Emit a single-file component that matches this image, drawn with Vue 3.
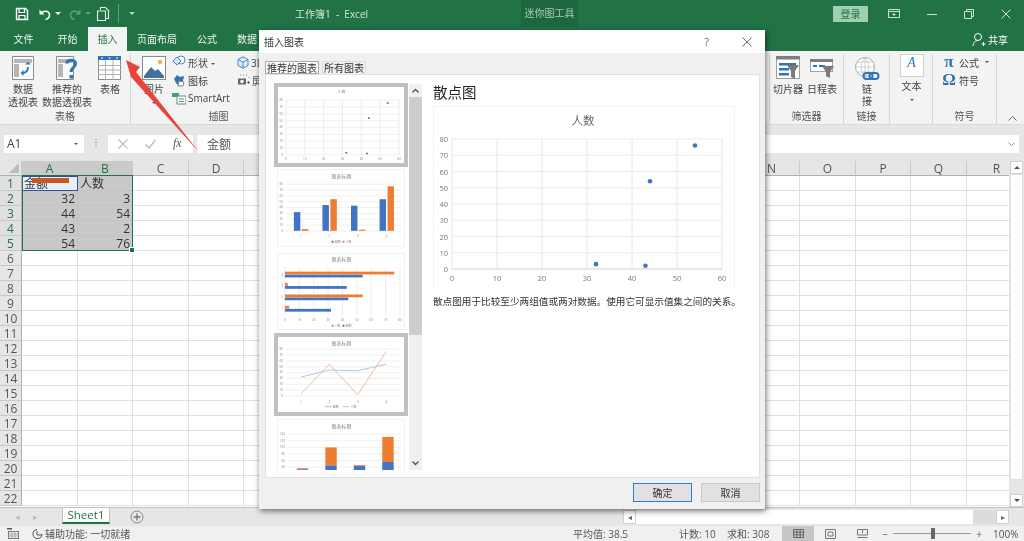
<template>
  <div class="app">
    <!-- 标题栏 -->
    <div class="titlebar">
      <div class="qat">
        <svg class="q q-save" width="14" height="14" viewBox="0 0 14 14"><path d="M1.500 1.500h9l2 2v9h-11z" fill="none" stroke="#fff" stroke-width="1.400"/><path d="M4 2v3.500h5.500V2M4 12.500V8.500h6v4" fill="none" stroke="#fff" stroke-width="1.200"/></svg>
        <svg class="q q-undo" width="14" height="14" viewBox="0 0 14 14"><path d="M3 6.500c2-3.500 8.500-3 8.500 1.500 0 2.500-2 4-4 4.500" fill="none" stroke="#fff" stroke-width="1.600"/><path d="M1.500 2.500v5h5z" fill="#fff"/></svg>
        <span class="mini-caret"></span>
        <svg class="q q-redo" width="14" height="14" viewBox="0 0 14 14"><path d="M11 6.500c-2-3.500-8.500-3-8.500 1.500 0 2.500 2 4 4 4.500" fill="none" stroke="#5f9c7c" stroke-width="1.600"/><path d="M12.500 2.500v5h-5z" fill="#5f9c7c"/></svg>
        <span class="mini-caret dim"></span>
        <svg class="q q-page" width="14" height="16" viewBox="0 0 14 16"><path d="M4.500 4V1.500h5l3 3v8h-3M1.500 5h8v9.500h-8z" fill="none" stroke="#e6f0ea" stroke-width="1.100"/></svg>
        <span class="q-sep"></span>
        <span class="mini-caret line"></span>
      </div>
      <div class="doc-title">工作簿1&nbsp; - &nbsp;Excel</div>
      <div class="context">迷你图工具</div>
      <button class="login">登录</button>
      <div class="win">
        <svg width="12" height="10" viewBox="0 0 12 10"><path d="M.5.5h11v8H.5zM.5 2.500h11M6 4v3M4.500 5.500h3" fill="none" stroke="#cfe3d8"/></svg>
        <svg width="10" height="10" viewBox="0 0 10 10"><path d="M0 5.500h10" stroke="#cfe3d8"/></svg>
        <svg width="10" height="10" viewBox="0 0 10 10"><path d="M.5 2.500h7v7h-7zM2.500 2.500v-2h7v7h-2" fill="none" stroke="#cfe3d8"/></svg>
        <svg width="10" height="10" viewBox="0 0 10 10"><path d="M.5.5l9 9M9.500.5l-9 9" stroke="#cfe3d8"/></svg>
      </div>
    </div>

    <!-- 选项卡 -->
    <div class="tabs">
      <span v-for="t in ribbonTabs" :key="t.name" class="tab" :class="{ active: t.active }" :style="{ width: t.w + 'px' }">{{ t.name }}</span>
      <div class="share">
        <svg width="14" height="15" viewBox="0 0 14 15"><circle cx="6" cy="5" r="3.500" fill="none" stroke="#fff"/><path d="M1 14c.5-4 2.500-5.500 5-5.500M9.500 12h4M11.500 10v4" fill="none" stroke="#fff"/></svg>
        <span>共享</span>
      </div>
    </div>

    <!-- 功能区 -->
    <div class="ribbon">
      <div class="rg" style="width: 131px">
        <div class="rg-body">
          <div class="big" style="width: 42px; margin-left: 2px">
            <svg width="24" height="24" viewBox="0 0 24 24"><path d="M1.500.5h21v23h-21z" fill="#fafafa" stroke="#8a8a8a"/><path d="M3 3h18v4H3zM3 8h5v13H3z" fill="#b5b5b5"/><path d="M11 17c4 0 6-2 6-6" fill="none" stroke="#2e75b6" stroke-width="1.800"/><path d="M14 8.500l3-2.500 3 2.500zM12.500 14l-3 3 3 3z" fill="#2e75b6"/></svg>
            <span>数据<br>透视表</span>
          </div>
          <div class="big" style="width: 46px">
            <svg width="24" height="24" viewBox="0 0 24 24"><path d="M1.500.5h17v23h-17z" fill="#fafafa" stroke="#8a8a8a"/><path d="M3 3h14v4H3zM3 8h5v13H3z" fill="#b5b5b5"/><path d="M11.500 7.500c1-4.500 9-4.500 9 .5 0 3.500-4.500 3.500-4.500 8" fill="none" stroke="#2e75b6" stroke-width="3"/><rect x="14.500" y="19" width="3.500" height="3.500" fill="#2e75b6"/></svg>
            <span>推荐的<br>数据透视表</span>
          </div>
          <div class="big" style="width: 40px">
            <svg width="24" height="24" viewBox="0 0 24 24"><rect x=".5" y=".5" width="22" height="23" fill="#fff" stroke="#8a8a8a"/><path d="M0 9.500h23M0 14h23M0 18.500h23M7.500 4v20M15 4v20" stroke="#b0b0b0"/><rect y="0" width="23" height="4" fill="#2e75b6"/><path d="M3 2h2M10.500 2h2M18 2h2" stroke="#fff"/></svg>
            <span>表格</span>
          </div>
        </div>
        <div class="rg-label">表格</div>
      </div>

      <div class="rg" style="width: 639px">
        <div class="rg-body">
          <div class="big" style="width: 38px; margin-left: 4px">
            <svg width="24" height="24" viewBox="0 0 24 24"><rect x=".5" y=".5" width="23" height="23" fill="#fff" stroke="#8a8a8a"/><circle cx="18" cy="6" r="2.200" fill="#f0b04d"/><path d="M2 20l7-9 4 4 3-2 6 7v2H2z" fill="#41719c"/></svg>
            <span>图片<br><i class="caret"></i></span>
          </div>
          <div class="smalls col2">
            <div class="small"><svg width="14" height="14" viewBox="0 0 14 14"><circle cx="9" cy="5" r="4" fill="#fff" stroke="#4a86c5"/><path d="M1 6l4-4 4 4-4 4z" fill="#dce6f2" stroke="#4a86c5"/></svg><span>形状 <i class="caret"></i></span></div>
            <div class="small"><svg width="14" height="14" viewBox="0 0 14 14"><path d="M2 6l3-4 3 2 4-1-1 5-4 5-3-3z" fill="#2e75b6"/><path d="M7 8l5 1-1 4H6z" fill="#fff" stroke="#7f7f7f"/></svg><span>图标</span></div>
            <div class="small"><svg width="14" height="14" viewBox="0 0 14 14"><path d="M0 2h7v4H0z" fill="#3aa37a"/><path d="M5 5h9v8H5z" fill="#fff" stroke="#7f7f7f"/><path d="M7 8h5M7 10.500h5" stroke="#3aa37a"/></svg><span>SmartArt</span></div>
          </div>
          <div class="smalls">
            <div class="small"><svg width="12" height="13" viewBox="0 0 12 13"><path d="M6 .8l5 2.700v6L6 12.200 1 9.500v-6zM1 3.500l5 2.700 5-2.700M6 6.200v6" fill="#e4eef7" stroke="#3f87c6"/></svg><span>3D 模型</span></div>
            <div class="small"><svg width="13" height="12" viewBox="0 0 13 12"><path d="M1 4.500h8v6H1z" fill="#666"/><circle cx="5" cy="7.500" r="1.800" fill="#fff"/><path d="M3 1h1M6 1h1M9 1h1M12 3v1" stroke="#888"/><path d="M10 8.500h3M11.500 7v3" stroke="#2e75b6"/></svg><span>屏幕截图</span></div>
          </div>
        </div>
        <div class="rg-label" style="margin-right: 463px">插图</div>
      </div>

      <div class="rg" style="width: 74px">
        <div class="rg-body">
          <div class="big" style="width: 36px">
            <svg width="24" height="24" viewBox="0 0 24 24"><rect x=".5" y=".5" width="23" height="22" fill="#fff" stroke="#a0a0a0"/><rect width="24" height="3.500" fill="#7f7f7f"/><path d="M3 7h17v2.500H3zM3 12h10v2.500H3zM3 17h10v2.500H3z" fill="#2e75b6"/><path d="M11 9h12l-4 6v8l-4-2v-6z" fill="#7a7a7a"/></svg>
            <span>切片器</span>
          </div>
          <div class="big" style="width: 32px">
            <svg width="24" height="24" viewBox="0 0 24 24"><rect x=".5" y="3.500" width="22" height="12" fill="#fff" stroke="#a0a0a0"/><rect y="3" width="23" height="3" fill="#7f7f7f"/><path d="M3 9h4v2H3zM9 9h6v2H9z" fill="#2e75b6"/><path d="M12 10h12l-4 6v6l-4-2v-4z" fill="#7a7a7a"/></svg>
            <span>日程表</span>
          </div>
        </div>
        <div class="rg-label">筛选器</div>
      </div>

      <div class="rg" style="width: 46px">
        <div class="rg-body">
          <div class="big" style="width: 46px">
            <svg width="26" height="26" viewBox="0 0 26 26"><circle cx="11" cy="11" r="9.500" fill="#fff" stroke="#a8a8a8"/><path d="M1.500 11h19M11 1.500v19M3.500 6h15M3.500 16h15M11 1.500c-5 5-5 14 0 19M11 1.500c5 5 5 14 0 19" fill="none" stroke="#bdbdbd" stroke-width=".7"/><rect x="9.500" y="17" width="9" height="6" rx="3" fill="none" stroke="#2e75b6" stroke-width="2"/><rect x="15.500" y="17" width="9" height="6" rx="3" fill="none" stroke="#2e75b6" stroke-width="2"/></svg>
            <span class="tight">链<br>接</span>
          </div>
        </div>
        <div class="rg-label">链接</div>
      </div>

      <div class="rg" style="width: 43px">
        <div class="rg-body">
          <div class="big big-text">
            <div class="text-box">A</div>
            <span>文本<br><i class="caret"></i></span>
          </div>
        </div>
      </div>

      <div class="rg" style="width: 64px">
        <div class="rg-body">
          <div class="smalls sym">
            <div class="small"><b>π</b><span>公式</span><i class="caret far"></i></div>
            <div class="small"><b>Ω</b><span>符号</span></div>
          </div>
        </div>
        <div class="rg-label">符号</div>
      </div>
      <svg class="collapse" width="9" height="5" viewBox="0 0 9 5"><path d="M.5 4.500l4-4 4 4" fill="none" stroke="#666"/></svg>
    </div>

    <!-- 编辑栏 -->
    <div class="formula">
      <div class="namebox"><span>A1</span><i class="caret"></i></div>
      <div class="dots"></div>
      <div class="fx-btns">
        <svg width="10" height="10" viewBox="0 0 10 10"><path d="M.5.5l9 9M9.500.5l-9 9" stroke="#bdbdbd" stroke-width="1.200"/></svg>
        <svg width="11" height="10" viewBox="0 0 11 10"><path d="M.5 5.500l3.500 3.500 6.500-8" fill="none" stroke="#bdbdbd" stroke-width="1.400"/></svg>
        <em>fx</em>
      </div>
      <div class="finput"><span>金额</span><svg width="7" height="4" viewBox="0 0 7 4"><path d="M.5.5l3 3 3-3" fill="none" stroke="#999"/></svg></div>
    </div>

    <!-- 工作表 -->
    <div class="sheet-wrap">
      <div class="sheet" :style="{ gridTemplateColumns: gridCols }">
        <div class="corner"><i></i></div>
        <div v-for="(c, i) in columns" :key="c" class="chead" :class="{ on: i < 2 }">{{ c }}</div>
        <template v-for="r in 22" :key="r">
          <div class="rhead" :class="{ on: r <= 5 }">{{ r }}</div>
          <div v-for="(c, i) in columns" :key="c" class="cell"
            :class="{ sel: r <= 5 && i < 2, num: r > 1, active: r === 1 && i === 0 }">{{ cellText(r, i) }}</div>
        </template>
        <div class="sel-box"><i></i></div>
        <div class="a1-bar"></div>
      </div>
      <div class="vscroll">
        <div class="sb-btn"><i class="up"></i></div>
        <div class="sb-thumb"></div>
        <div class="sb-track"></div>
        <div class="sb-btn"><i class="down"></i></div>
      </div>
    </div>

    <!-- 底部工作表标签 -->
    <div class="sheetbar">
      <span class="nav">◂</span><span class="nav">▸</span>
      <div class="sheet-tab">Sheet1</div>
      <svg class="plus" width="14" height="14" viewBox="0 0 14 14"><circle cx="7" cy="7" r="6" fill="none" stroke="#8a8a8a"/><path d="M7 3.500v7M3.500 7h7" stroke="#777" stroke-width="1.300"/></svg>
      <div class="hs">
        <div class="hs-btn">◂</div>
        <div class="hs-thumb"></div>
        <div class="hs-btn">▸</div>
      </div>
    </div>

    <!-- 状态栏 -->
    <div class="status">
      <svg class="st-ic" width="12" height="11" viewBox="0 0 12 11"><path d="M0 .5h5" stroke="#555" stroke-width="2"/><rect x="1.500" y="3.500" width="10" height="7" fill="none" stroke="#777"/><path d="M1.500 6h10M1.500 8h10M5 3.500v7M8 3.500v7" stroke="#aaa"/></svg>
      <svg class="st-ic2" width="12" height="12" viewBox="0 0 12 12"><path d="M5 1.500a4.500 4.500 0 1 0 5 4.500" fill="none" stroke="#555"/><path d="M5 3v4h5" fill="none" stroke="#555"/></svg>
      <span class="st-a">辅助功能: 一切就绪</span>
      <span class="st-avg">平均值: 38.5</span>
      <span class="st-cnt">计数: 10</span>
      <span class="st-sum">求和: 308</span>
      <div class="view on"><svg width="11" height="9" viewBox="0 0 11 9"><path d="M.5.500h10v8H.5zM.5 3.200h10M.5 5.800h10M3.800.5v8M7.200.5v8" fill="none" stroke="#666"/></svg></div>
      <div class="view"><svg width="11" height="10" viewBox="0 0 11 10"><path d="M.5.500h10v9H.5zM3 3h5v4H3z" fill="none" stroke="#777"/></svg></div>
      <div class="view"><svg width="11" height="10" viewBox="0 0 11 10"><path d="M.5 6V.5h10V6zM5.500.5V4M.5 8.500h10" fill="none" stroke="#777"/></svg></div>
      <span class="zm">−</span>
      <div class="slider"><i></i></div>
      <span class="zm plus-zm">+</span>
      <span class="pct">100%</span>
    </div>

    <!-- 插入图表 对话框 -->
    <div class="dialog">
      <div class="dlg-title">
        <span>插入图表</span>
        <span class="help">?</span>
        <svg width="10" height="10" viewBox="0 0 10 10"><path d="M.5.5l9 9M9.500.5l-9 9" stroke="#666"/></svg>
      </div>
      <div class="dlg-body">
        <div class="dlg-tabs">
          <span class="dtab on">推荐的图表</span>
          <span class="dtab">所有图表</span>
        </div>
        <div class="dlg-panel">
          <div class="thumbs">
            <div class="thumb-list">
              <!-- 散点 -->
              <div class="thumb frame" style="height: 84px; margin-bottom: 2px">
                <svg width="127" height="76" viewBox="0 0 127 76">
                  <text x="64" y="6" class="t-title" style="font-size: 4px">人数</text>
                  <path v-for="g in 9" :key="g" :d="`M8 ${13 + (g - 1) * 6.900}H122`" stroke="#e8e8e8" stroke-width=".7"/>
                  <path v-for="g in 7" :key="g" :d="`M${8 + (g - 1) * 19} 13V68`" stroke="#e4e4e4" stroke-width=".7"/>
                  <circle v-for="(p, i) in points" :key="i" :cx="8 + p[0] * 1.900" :cy="68 - p[1] * 0.6875" r="1" fill="#4472c4"/>
                  <text v-for="g in 9" :key="g" x="5" :y="69 - (g - 1) * 6.900" class="t-ax">{{ (g - 1) * 10 }}</text>
                  <text v-for="g in 7" :key="g" :x="8 + (g - 1) * 19" y="73" class="t-ax mid">{{ (g - 1) * 10 }}</text>
                </svg>
              </div>
              <!-- 柱形 -->
              <div class="thumb plain" style="height: 78px; margin-bottom: 6px">
                <svg width="127" height="76" viewBox="0 0 127 76">
                  <text x="64" y="8" class="t-title">图表标题</text>
                  <path v-for="g in 9" :key="g" :d="`M8 ${14 + (g - 1) * 5.900}H124`" stroke="#e8e8e8" stroke-width=".7"/>
                  <template v-for="(a, i) in amount" :key="i">
                    <rect :x="16 + i * 28.800" :y="61 - a * 0.59" width="6.500" :height="a * 0.59" fill="#4472c4"/>
                    <rect :x="24 + i * 28.800" :y="61 - people[i] * 0.59" width="6.500" :height="people[i] * 0.59" fill="#ed7d31"/>
                    <text :x="23 + i * 28.800" y="67" class="t-ax mid">{{ i + 1 }}</text>
                  </template>
                  <text v-for="g in 9" :key="g" x="5" :y="62 - (g - 1) * 5.900" class="t-ax">{{ (g - 1) * 10 }}</text>
                  <rect x="54" y="71" width="2" height="2" fill="#4472c4"/><text x="57" y="73" class="t-ax start">金额</text>
                  <rect x="65" y="71" width="2" height="2" fill="#ed7d31"/><text x="68" y="73" class="t-ax start">人数</text>
                </svg>
              </div>
              <!-- 条形 -->
              <div class="thumb plain" style="height: 77px; margin-bottom: 3px">
                <svg width="127" height="76" viewBox="0 0 127 76">
                  <text x="64" y="7" class="t-title">图表标题</text>
                  <path v-for="g in 9" :key="g" :d="`M${7 + (g - 1) * 14.500} 13V62`" stroke="#e4e4e4" stroke-width=".7"/>
                  <template v-for="(a, i) in amount" :key="i">
                    <rect x="7" :y="55 - i * 11.500" :width="a * 1.450" height="2.800" fill="#4472c4"/>
                    <rect x="7" :y="52 - i * 11.500" :width="people[i] * 1.450" height="2.800" fill="#ed7d31"/>
                    <text x="5" :y="56 - i * 11.500" class="t-ax">{{ i + 1 }}</text>
                  </template>
                  <text v-for="g in 9" :key="g" :x="7 + (g - 1) * 14.500" y="67" class="t-ax mid">{{ (g - 1) * 10 }}</text>
                  <rect x="54" y="71" width="2" height="2" fill="#ed7d31"/><text x="57" y="73" class="t-ax start">人数</text>
                  <rect x="65" y="71" width="2" height="2" fill="#4472c4"/><text x="68" y="73" class="t-ax start">金额</text>
                </svg>
              </div>
              <!-- 折线 -->
              <div class="thumb frame" style="height: 83px; margin-bottom: 3px">
                <svg width="127" height="75" viewBox="0 0 127 75">
                  <text x="64" y="8" class="t-title">图表标题</text>
                  <path v-for="g in 9" :key="g" :d="`M8 ${12 + (g - 1) * 5.900}H123`" stroke="#e8e8e8" stroke-width=".7"/>
                  <polyline :points="linePts(amount)" fill="none" stroke="#a9bde3" stroke-width=".9"/>
                  <polyline :points="linePts(people)" fill="none" stroke="#f4b183" stroke-width=".9"/>
                  <text v-for="g in 9" :key="g" x="5" :y="60 - (g - 1) * 5.900" class="t-ax">{{ (g - 1) * 10 }}</text>
                  <text v-for="g in 4" :key="g" :x="23 + (g - 1) * 28.700" y="66" class="t-ax mid">{{ g }}</text>
                  <path d="M47 70h7" stroke="#a9bde3"/><text x="55" y="71" class="t-ax start">金额</text>
                  <path d="M65 70h7" stroke="#f4b183"/><text x="73" y="71" class="t-ax start">人数</text>
                </svg>
              </div>
              <!-- 堆积柱形 -->
              <div class="thumb plain" style="height: 78px">
                <svg width="127" height="76" viewBox="0 0 127 76">
                  <text x="64" y="8" class="t-title">图表标题</text>
                  <path v-for="g in 8" :key="g" :d="`M10 ${14 + (g - 1) * 6.650}H124`" stroke="#e8e8e8" stroke-width=".7"/>
                  <template v-for="(a, i) in amount" :key="i">
                    <rect :x="19 + i * 28.700" :y="60 - a * 0.333" width="11.500" :height="a * 0.333" fill="#4472c4"/>
                    <rect :x="19 + i * 28.700" :y="60 - (a + people[i]) * 0.333" width="11.500" :height="people[i] * 0.333" fill="#ed7d31"/>
                  </template>
                  <text v-for="g in 6" :key="g" x="7" :y="15 + (g - 1) * 6.650" class="t-ax">{{ 160 - g * 20 }}</text>
                </svg>
              </div>
            </div>
            <div class="t-scroll">
              <div class="ts-btn"><svg width="7" height="5" viewBox="0 0 7 5"><path d="M.5 4.500l3-3 3 3" fill="none" stroke="#555" stroke-width="1.400"/></svg></div>
              <div class="ts-thumb"></div>
              <div class="ts-track"></div>
              <div class="ts-btn"><svg width="7" height="5" viewBox="0 0 7 5"><path d="M.5.5l3 3 3-3" fill="none" stroke="#555" stroke-width="1.400"/></svg></div>
            </div>
          </div>
          <div class="preview">
            <h2>散点图</h2>
            <div class="chart">
              <svg width="302" height="183" viewBox="0 0 302 183">
                <text x="150" y="19" class="c-title">人数</text>
                <path v-for="g in 9" :key="g" :d="`M19 ${33 + (g - 1) * 16.250}H289`" stroke="#ebebeb"/>
                <path v-for="g in 7" :key="g" :d="`M${19 + (g - 1) * 45} 33V163`" stroke="#e6e6e6"/>
                <path d="M19 163H289" stroke="#d9d9d9"/>
                <text v-for="g in 9" :key="g" x="15" :y="166 - (g - 1) * 16.250" class="c-ax">{{ (g - 1) * 10 }}</text>
                <text v-for="g in 7" :key="g" :x="19 + (g - 1) * 45" y="175" class="c-ax mid">{{ (g - 1) * 10 }}</text>
                <circle v-for="(p, i) in points" :key="i" :cx="19 + p[0] * 4.500" :cy="163 - p[1] * 1.625" r="2.300" fill="#4472c4"/>
              </svg>
            </div>
            <p>散点图用于比较至少两组值或两对数据。使用它可显示值集之间的关系。</p>
          </div>
        </div>
        <div class="dlg-foot">
          <button class="btn primary">确定</button>
          <button class="btn">取消</button>
        </div>
      </div>
    </div>

    <!-- 红色箭头标注 -->
    <svg class="arrow" width="90" height="110" viewBox="120 50 90 110">
      <polygon points="126,60 140,67 136,72 199,152 131,77" fill="#e8443c"/>
    </svg>
  </div>
</template>

<script setup>
const ribbonTabs = [
  { name: '文件', w: 47 },
  { name: '开始', w: 41 },
  { name: '插入', w: 39, active: true },
  { name: '页面布局', w: 60 },
  { name: '公式', w: 40 },
  { name: '数据', w: 40 }
]

const columns = 'ABCDEFGHIJKLMNOPQR'.split('')
const widths = [56, 55, 56, 55, 56, 55, 56, 55, 56, 55, 56, 55, 56, 56, 56, 55, 56, 60]
const gridCols = '22px ' + widths.map(w => w + 'px').join(' ')

const amount = [32, 44, 43, 54]
const people = [3, 54, 2, 76]
const points = amount.map((a, i) => [a, people[i]])

const cellText = (r, i) => {
  if (i > 1 || r > 5) return ''
  if (r === 1) return i === 0 ? '金额' : '人数'
  return i === 0 ? amount[r - 2] : people[r - 2]
}

const linePts = arr => arr.map((v, i) => `${23 + i * 28.7},${59 - v * 0.59}`).join(' ')
</script>

<style>
html, body { margin: 0; padding: 0; overflow: hidden; }
</style>

<style scoped>
.app {
  position: relative;
  width: 1024px;
  height: 541px;
  overflow: hidden;
  font-family: "Open Sans", "Noto Sans CJK SC", sans-serif;
  font-size: 10px;
  color: #444;
  background: #e6e6e6;
  filter: blur(.3px);
}
i { font-style: normal; }

.titlebar {
  height: 27px;
  background: #217346;
  display: flex;
  align-items: center;
  color: #d5e6dc;
}
.qat { display: flex; align-items: center; width: 295px; padding-left: 15px; box-sizing: border-box; flex: none; }
.q-undo { margin-left: 9px; }
.q-redo { margin-left: 7px; }
.q-page { margin-left: 5px; }
.q-sep { width: 1px; height: 19px; background: #5f9c7c; margin-left: 8px; }
.mini-caret { width: 0; height: 0; border: 3px solid transparent; border-top-color: #fff; border-bottom: none; margin-left: 3px; }
.mini-caret.dim { border-top-color: #5f9c7c; }
.mini-caret.line { border-top-color: #b5d3c3; margin-left: 10px; }
.doc-title { width: 226px; font-size: 10px; flex: none; }
.context {
  width: 57px;
  height: 27px;
  line-height: 27px;
  text-align: center;
  background: #1d6640;
  color: #aacbb9;
  font-size: 10px;
  flex: none;
}
.login {
  margin-left: 255px;
  width: 35px;
  height: 16px;
  padding: 0;
  border: none;
  background: #9fd0b3;
  color: #217346;
  font: 10px "Noto Sans CJK SC", sans-serif;
  flex: none;
}
.win { display: flex; align-items: center; gap: 27px; margin-left: 20px; }

.tabs { height: 24px; background: #217346; display: flex; color: #f0f6f2; position: relative; }
.tab { text-align: center; line-height: 24px; font-size: 10px; flex: none; }
.tab.active { background: #f3f3f3; color: #217346; }
.share { margin-left: auto; margin-right: 16px; display: flex; align-items: center; gap: 2px; color: #fff; }

.ribbon {
  height: 74px;
  background: #f3f3f3;
  display: flex;
  position: relative;
  border-bottom: 1px solid #dcdcdc;
  box-sizing: border-box;
}
.rg { flex: none; display: flex; flex-direction: column; border-right: 1px solid #d5d5d5; box-sizing: border-box; margin-top: 3px; height: 70px; }
.rg-body { flex: 1; display: flex; min-height: 0; }
.rg-label { height: 15px; line-height: 15px; text-align: center; color: #555; font-size: 10px; flex: none; }
.big { display: flex; flex-direction: column; align-items: center; gap: 1px; text-align: center; line-height: 13px; flex: none; padding-top: 2px; box-sizing: border-box; font-size: 10px; white-space: nowrap; }
.big svg { margin-bottom: 2px; flex: none; }
.tight { margin-top: -2px; line-height: 12px; }
.big-text { width: 43px; padding-top: 0; }
.text-box { width: 24px; height: 23px; background: #fff; border: 1px solid #d0d0d0; box-sizing: border-box; text-align: center; line-height: 21px; color: #2e75b6; font: italic 14px "Liberation Serif", serif; margin-bottom: 2px; }
.caret { display: inline-block; width: 0; height: 0; border: 2.5px solid transparent; border-top-color: #555; border-bottom: none; vertical-align: middle; }
.smalls { display: flex; flex-direction: column; gap: 4px; padding-top: 1px; }
.col2 { width: 65px; margin-left: -1px; flex: none; }
.small { display: flex; align-items: center; gap: 1px; height: 14px; white-space: nowrap; font-size: 10px; }
.small svg { margin-right: 1px; flex: none; }
.sym { margin-left: 9px; }
.sym b { font: bold 17px "Liberation Serif", serif; color: #2e75b6; width: 14px; text-align: center; margin-right: 2px; }
.far { margin-left: 5px; }
.collapse { position: absolute; right: 7px; bottom: 3px; }

.formula { height: 36px; background: #e6e6e6; display: flex; align-items: center; padding: 1px 4px 0; box-sizing: border-box; }
.namebox { width: 80px; height: 18px; background: #fff; display: flex; align-items: center; justify-content: space-between; padding: 0 6px 0 3px; box-sizing: border-box; font-size: 12px; flex: none; }
.dots { width: 2px; height: 9px; margin: 0 11px 0 11px; background: repeating-linear-gradient(#aaa 0 1px, transparent 1px 3px); flex: none; }
.fx-btns { width: 85px; height: 18px; background: #fff; display: flex; align-items: center; gap: 17px; padding-left: 10px; box-sizing: border-box; flex: none; }
.fx-btns em { font: italic 12px "Liberation Serif", serif; color: #555; }
.finput { width: 822px; margin-left: 4px; height: 18px; background: #fff; display: flex; align-items: center; justify-content: space-between; padding: 0 4px 0 10px; box-sizing: border-box; font-size: 12px; color: #555; flex: none; }

.sheet-wrap { height: 346px; display: flex; background: #fff; box-sizing: border-box; }
.sheet { position: relative; display: grid; grid-auto-rows: 15px; width: 1009px; height: 346px; overflow: hidden; font-size: 12px; flex: none; align-content: start; }
.corner { background: #e6e6e6; border-right: 1px solid #c8c8c8; border-bottom: 1px solid #b0b0b0; box-sizing: border-box; position: relative; }
.corner i { position: absolute; right: 2px; bottom: 2px; border-left: 10px solid transparent; border-bottom: 10px solid #bdbdbd; }
.chead { background: #e6e6e6; border-right: 1px solid #c8c8c8; border-bottom: 1px solid #b0b0b0; text-align: center; line-height: 16px; box-sizing: border-box; color: #555; font-size: 12px; }
.chead.on { background: #cacaca; color: #217346; }
.rhead { background: #e6e6e6; border-right: 1px solid #b0b0b0; border-bottom: 1px solid #c8c8c8; text-align: center; line-height: 16px; box-sizing: border-box; color: #555; font-size: 12px; }
.rhead.on { color: #217346; background: #e0e0e0; }
.cell { border-right: 1px solid #e0e0e0; border-bottom: 1px solid #e0e0e0; box-sizing: border-box; line-height: 16px; padding: 0 2px; color: #333; white-space: nowrap; }
.cell.sel { background: #c9c9c9; border-color: #c2c2c2; }
.cell.num.sel { text-align: right; }
.cell.active { background: #e8eefa; outline: 1px solid #2f5597; outline-offset: -1px; }
.sel-box { position: absolute; left: 22px; top: 14px; width: 111px; height: 76px; border: 1px solid #217346; box-sizing: border-box; pointer-events: none; }
.sel-box i { position: absolute; right: -3px; bottom: -3px; width: 4px; height: 4px; background: #217346; border: 1px solid #fff; }
.a1-bar { position: absolute; left: 32px; top: 17px; width: 37px; height: 5px; background: #c55a1e; }

.vscroll { width: 15px; display: flex; flex-direction: column; background: #e6e6e6; flex: none; }
.sb-btn { height: 13px; background: #fff; border: 1px solid #d0d0d0; box-sizing: border-box; display: flex; align-items: center; justify-content: center; margin: 0 1px; }
.up { border: 3px solid transparent; border-bottom-color: #555; border-top: none; }
.down { border: 3px solid transparent; border-top-color: #555; border-bottom: none; }
.sb-thumb { height: 306px; background: #fff; margin: 0 1px; border: 1px solid #e0e0e0; box-sizing: border-box; }
.sb-track { flex: 1; }

.sheetbar { height: 19px; background: #e6e6e6; display: flex; align-items: flex-start; border-top: 1px solid #c0c0c0; box-sizing: border-box; position: relative; color: #bbb; }
.nav { width: 14px; text-align: center; font-size: 9px; line-height: 17px; margin-left: 10px; flex: none; }
.nav + .nav { margin-left: 4px; }
.sheet-tab { margin-left: 20px; width: 48px; height: 16px; background: #fff; color: #217346; border: 1px solid #c0c0c0; border-top: none; border-bottom: 2px solid #217346; box-sizing: border-box; text-align: center; line-height: 14px; font-size: 11.500px; flex: none; }
.plus { margin: 2px 0 0 20px; flex: none; }
.hs { display: flex; margin-left: 479px; height: 14px; width: 386px; margin-top: 2px; background: #dcdcdc; flex: none; }
.hs-btn { width: 13px; background: #fff; border: 1px solid #d0d0d0; box-sizing: border-box; font-size: 8px; line-height: 12px; text-align: center; color: #666; flex: none; }
.hs-thumb { width: 337px; background: #fff; margin-right: 23px; flex: none; }

.status { height: 15px; background: #f0f0f0; display: flex; align-items: center; font-size: 10px; color: #555; }
.st-ic { margin-left: 7px; flex: none; }
.st-ic2 { margin-left: 13px; flex: none; }
.st-a { margin-left: 1px; width: 528px; flex: none; }
.st-avg { width: 106px; flex: none; }
.st-cnt { width: 48px; flex: none; }
.st-sum { width: 55px; flex: none; }
.view { width: 32px; height: 15px; display: flex; align-items: center; justify-content: center; flex: none; }
.view.on { background: #c6c6c6; }
.zm { width: 10px; text-align: center; margin-left: 2px; flex: none; }
.plus-zm { margin-left: 0; }
.slider { width: 78px; height: 1px; background: #999; position: relative; margin: 0 3px; flex: none; }
.slider i { position: absolute; left: 38px; top: -5px; width: 4px; height: 11px; background: #666; }
.pct { margin-left: 9px; }

.dialog {
  position: absolute;
  left: 259px;
  top: 30px;
  width: 506px;
  height: 479px;
  background: #f0f0f0;
  box-shadow: 1px 2px 6px rgba(0, 0, 0, .55);
  display: flex;
  flex-direction: column;
  font-size: 10px;
  color: #333;
}
.dlg-title { height: 23px; background: #fff; display: flex; align-items: center; padding: 0 13px 0 5px; flex: none; font-size: 10px; }
.help { margin-left: auto; margin-right: 33px; color: #666; font-size: 11px; }
.dlg-body { flex: 1; display: flex; flex-direction: column; padding: 8px 5px 0 6px; min-height: 0; }
.dlg-tabs { display: flex; gap: 3px; height: 13px; align-items: flex-end; flex: none; }
.dtab { font-size: 10px; line-height: 12px; height: 13px; padding: 0 1px; border: 1px solid #ddd; border-bottom: none; box-sizing: border-box; white-space: nowrap; color: #333; }
.dtab.on { background: #fff; border: 1px solid #aaa; }
.dlg-panel { height: 404px; background: #fff; border: 1px solid #e2e2e2; box-sizing: border-box; display: flex; flex: none; padding: 8px 0 0 8px; }
.thumbs { display: flex; width: 159px; height: 387px; flex: none; }
.thumb-list { width: 134px; height: 387px; overflow: hidden; flex: none; }
.thumb { box-sizing: border-box; display: flex; overflow: hidden; justify-content: center; }
.thumb.frame { border: 4px solid #c0c0c0; }
.thumb.plain { border: 1px solid #f0f0f0; width: 128px; margin-left: 3px; }
.t-title { font-size: 5px; fill: #888; text-anchor: middle; }
.t-ax { font-size: 3px; fill: #888; text-anchor: end; }
.t-ax.mid { text-anchor: middle; }
.t-ax.start { text-anchor: start; }
.t-scroll { width: 13px; margin: 1px 0 0 1px; display: flex; flex-direction: column; background: #f0f0f0; flex: none; }
.ts-btn { height: 13px; display: flex; align-items: center; justify-content: center; flex: none; }
.ts-thumb { height: 238px; background: #cdcdcd; flex: none; }
.ts-track { flex: 1; }
.preview { width: 310px; flex: none; }
.preview h2 { margin: 0; font-size: 14.500px; font-weight: 400; color: #222; line-height: 20px; height: 23px; }
.chart { width: 302px; height: 183px; border: 1px solid #f2f2f2; border-bottom: none; box-sizing: border-box; overflow: hidden; }
.chart svg { display: block; margin: -1px 0 0 -1px; }
.c-title { font-size: 11.500px; fill: #666; text-anchor: middle; }
.c-ax { font-size: 7.500px; fill: #777; text-anchor: end; font-family: "Open Sans", sans-serif; }
.c-ax.mid { text-anchor: middle; }
.preview p { margin: 6px 0 0; font-size: 9.650px; line-height: 14px; color: #333; white-space: nowrap; }
.dlg-foot { display: flex; justify-content: flex-end; gap: 9px; padding-top: 5px; }
.btn { width: 59px; height: 19px; padding: 0; background: #e1e1e1; border: 1px solid #c8c8c8; box-sizing: border-box; font: 10px "Noto Sans CJK SC", sans-serif; color: #333; }
.btn.primary { border: 1px solid #2a7fd0; }

.arrow { position: absolute; left: 120px; top: 50px; pointer-events: none; }
</style>
